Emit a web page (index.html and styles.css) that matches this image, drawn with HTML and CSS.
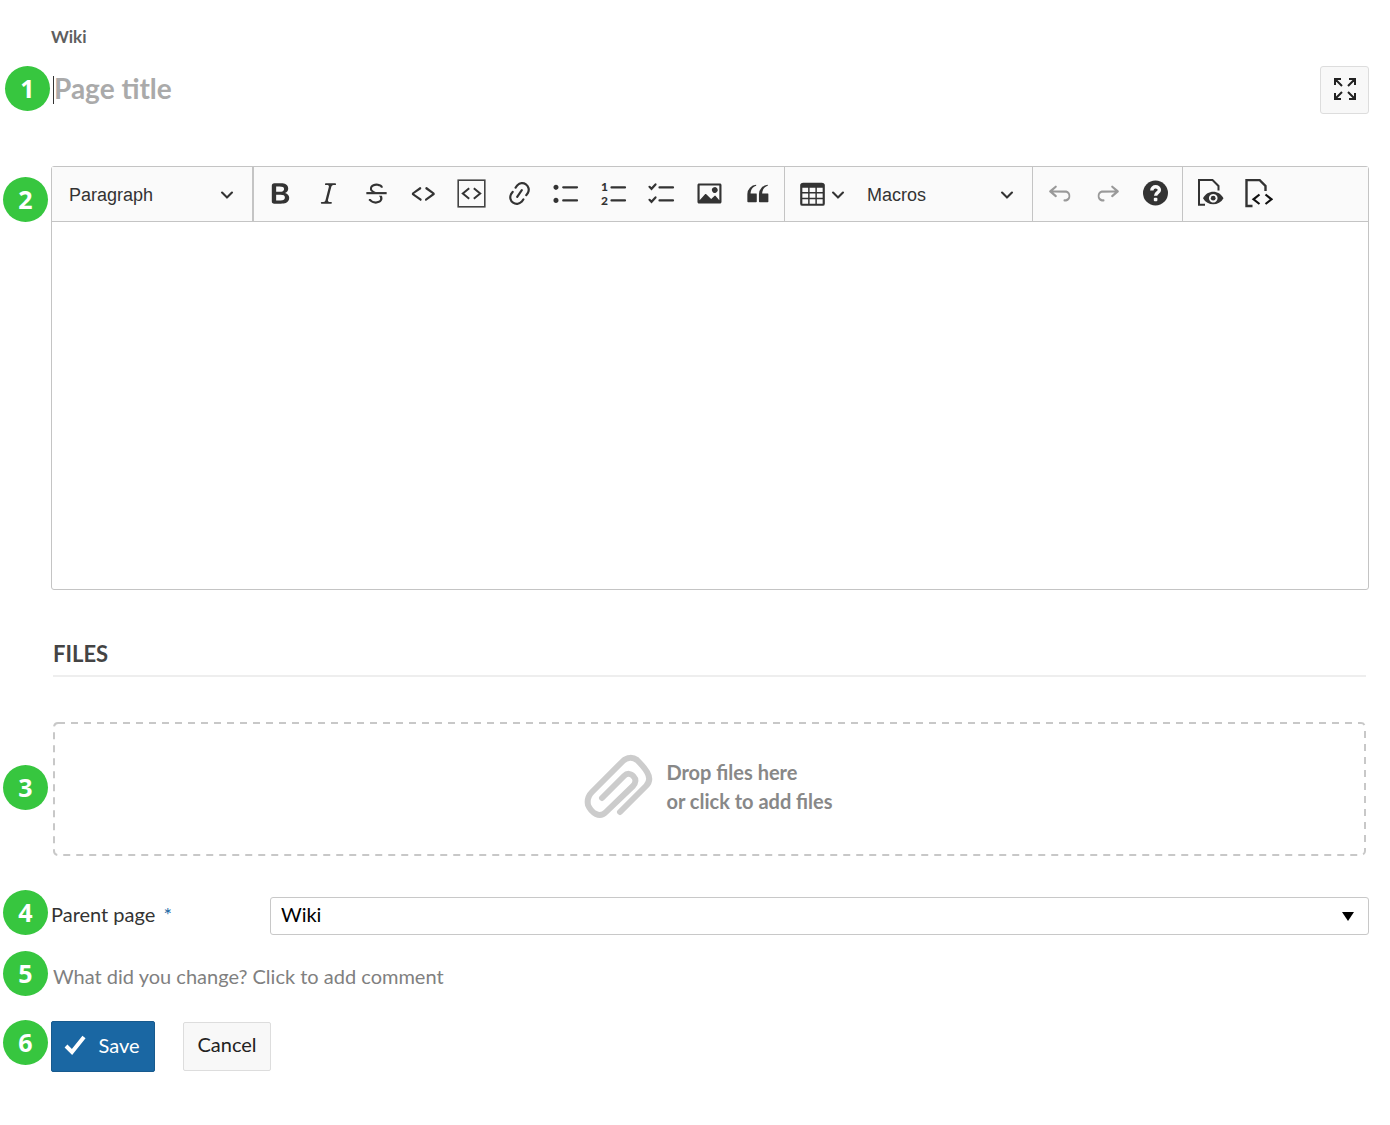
FILE: index.html
```html
<!DOCTYPE html>
<html lang="en">
<head>
<meta charset="utf-8">
<meta name="viewport" content="width=device-width, initial-scale=1">
<title>New wiki page</title>
<link rel="stylesheet" href="styles.css">
</head>
<body>
<form class="page">
  <nav class="breadcrumb"><a href="#">Wiki</a></nav>

  <div class="title-row">
    <span class="badge badge-title">1</span>
    <span class="caret"></span>
    <input class="title-input" type="text" placeholder="Page title" aria-label="Page title">
    <button class="zen" type="button" aria-label="Toggle full screen">
      <svg width="22" height="22" viewBox="0 0 22 22" fill="none" stroke="#222" stroke-width="2"><path d="M1 7V1H7M1 1L8 8M15 1H21V7M21 1L14 8M1 15V21H7M1 21L8 14M21 15V21H15M21 21L14 14"/></svg>
    </button>
  </div>

  <section class="editor">
    <span class="badge badge-editor">2</span>
    <div class="toolbar" role="toolbar" aria-label="Editor toolbar">
      <div class="group group-style">
        <div class="picker">
          <select aria-label="Heading"><option>Paragraph</option></select>
          <svg class="chevron" viewBox="0 0 10 10"><path d="M.941 4.523a.75.75 0 1 1 1.060-1.060l3.006 3.005 3.005-3.005a.75.75 0 1 1 1.060 1.060l-3.549 3.550a.75.75 0 0 1-1.168-.136L.941 4.523z"/></svg>
        </div>
      </div>
      <div class="group group-format">
        <button class="tool" type="button" aria-label="Bold"><svg viewBox="0 0 20 20"><path d="M10.187 17H5.773c-.637 0-1.092-.138-1.364-.415-.273-.277-.409-.718-.409-1.323V4.738c0-.617.14-1.062.419-1.332.279-.27.73-.406 1.354-.406h4.680c.69 0 1.288.041 1.793.124.506.083.96.242 1.360.478.341.197.644.447.906.75a3.262 3.262 0 0 1 .808 2.162c0 1.401-.722 2.426-2.167 3.075C15.050 10.175 16 11.315 16 13.010a3.756 3.756 0 0 1-2.296 3.504 6.100 6.100 0 0 1-1.517.377c-.571.073-1.238.11-2 .11zm-.217-6.217H7v4.087h3.069c1.977 0 2.965-.69 2.965-2.072 0-.707-.256-1.220-.768-1.537-.512-.319-1.277-.478-2.296-.478zM7 5.130v3.619h2.606c.729 0 1.292-.067 1.690-.2a1.600 1.600 0 0 0 .91-.765c.165-.267.247-.566.247-.897 0-.707-.26-1.176-.778-1.409-.519-.232-1.310-.348-2.375-.348H7z"/></svg></button>
        <button class="tool" type="button" aria-label="Italic"><svg viewBox="0 0 20 20"><path d="m9.586 14.633.021.004c-.036.335.095.655.393.962.082.083.173.15.274.201h1.474a.6.6 0 1 1 0 1.200H5.304a.6.6 0 0 1 0-1.200h1.150c.474-.07.809-.182 1.005-.334.157-.122.291-.32.404-.597l2.416-9.550a1.053 1.053 0 0 0-.281-.823 1.120 1.120 0 0 0-.442-.296H8.150a.6.6 0 0 1 0-1.200h6.443a.6.6 0 1 1 0 1.200h-1.195c-.376.056-.65.155-.823.296-.215.175-.423.439-.623.79l-2.366 9.347z"/></svg></button>
        <button class="tool" type="button" aria-label="Strikethrough"><svg viewBox="0 0 20 20"><path d="M7 16.400c-.8-.4-1.500-.9-2.200-1.500a.6.6 0 0 1-.2-.5l.3-.6h1c1 1.200 2.100 1.700 3.700 1.700 1 0 1.800-.3 2.300-.6.6-.4.6-1.200.6-1.300.2-1.200-.9-2.100-.9-2.100h2.100c.3.7.4 1.200.4 1.700v.8l-.6 1.200c-.6.8-1.100 1-1.600 1.200a6 6 0 0 1-2.400.6c-1 0-1.800-.3-2.500-.6zM6.800 9L6 8.300c-.4-.5-.5-.8-.5-1.600 0-.7.1-1.300.5-1.800.4-.6 1-1 1.600-1.300a6.300 6.300 0 0 1 4.700 0 4 4 0 0 1 1.700 1l.3.7c0 .1.2.4-.2.7-.4.2-.9.1-1 0a3 3 0 0 0-1.200-1c-.4-.2-1-.3-2-.4-.7 0-1.400.2-2 .6-.8.6-1 .8-1 1.500 0 .8.5 1 1.200 1.500.6.4 1.100.7 1.900 1H6.800z"/><path d="M3 10.500V9h14v1.500z"/></svg></button>
        <button class="tool" type="button" aria-label="Code"><svg viewBox="0 0 20 20"><path d="m12.500 5.700 5.200 3.900v1.300l-5.600 4c-.1.2-.3.2-.5.2-.3-.1-.6-.7-.6-1l.3-.4 4.700-3.500L11.500 7l-.2-.2c-.1-.3-.1-.6 0-.8.2-.2.5-.4.8-.4a.8.8 0 0 1 .4.1zm-5.200 0L2 9.600v1.300l5.600 4c.1.2.3.2.5.2.3-.1.7-.7.6-1 0-.1 0-.3-.2-.4l-5-3.500L8.200 7l.2-.2c.1-.3.1-.6 0-.8-.2-.2-.5-.4-.8-.4a.8.8 0 0 0-.3.1z"/></svg></button>
        <button class="tool" type="button" aria-label="Insert code snippet"><svg viewBox="0 0 29 29" fill="none"><rect x="1.200" y="1.200" width="26.600" height="26.600" fill="none" stroke="#444" stroke-width="1.600"/><path d="M12.200 9.200L5.800 14.500L12.200 19.800M16.800 9.200L23.200 14.500L16.800 19.800" fill="none" stroke="#333" stroke-width="2"/></svg></button>
        <button class="tool" type="button" aria-label="Link"><svg viewBox="0 0 20 20"><path d="m11.077 15 .991-1.416a.75.75 0 1 1 1.229.86l-1.148 1.640a.748.748 0 0 1-.217.206 5.251 5.251 0 0 1-8.503-5.955.741.741 0 0 1 .12-.274l1.147-1.639a.75.75 0 1 1 1.228.86L4.933 10.700l.006.003a3.750 3.750 0 0 0 6.132 4.294l.006.004zm5.494-5.335a.748.748 0 0 1-.12.274l-1.147 1.639a.75.75 0 1 1-1.228-.86l.86-1.230a3.750 3.750 0 0 0-6.144-4.301l-.86 1.229a.75.75 0 0 1-1.229-.86l1.148-1.640a.748.748 0 0 1 .217-.206 5.251 5.251 0 0 1 8.503 5.955zm-4.563-2.532a.75.75 0 0 1 .184 1.045l-3.155 4.505a.75.75 0 1 1-1.229-.86l3.155-4.506a.75.75 0 0 1 1.045-.184z"/></svg></button>
        <button class="tool" type="button" aria-label="Bulleted list"><svg viewBox="0 0 20 20"><path d="M7 5.750c0 .414.336.75.75.75h9.500a.75.75 0 1 0 0-1.500h-9.500a.75.75 0 0 0-.75.75zm-6 0C1 4.784 1.777 4 2.750 4c.966 0 1.750.777 1.750 1.750 0 .966-.777 1.750-1.750 1.750C1.784 7.500 1 6.723 1 5.750zm6 9c0 .414.336.75.75.75h9.500a.75.75 0 1 0 0-1.500h-9.500a.75.75 0 0 0-.75.75zm-6 0c0-.966.777-1.750 1.750-1.750.966 0 1.750.777 1.750 1.750 0 .966-.777 1.750-1.750 1.750-.966 0-1.750-.777-1.750-1.750z"/></svg></button>
        <button class="tool" type="button" aria-label="Numbered list"><svg viewBox="0 0 29 29"><path d="M11.500 8.400h13.500M11.500 21.400h13.500" fill="none" stroke="#333" stroke-width="2.200" stroke-linecap="round"/><text class="list-digit" x="1" y="12">1</text><text class="list-digit" x="1" y="26">2</text></svg></button>
        <button class="tool" type="button" aria-label="To-do list"><svg viewBox="0 0 29 29"><path d="M12.500 8.400h13.500M12.500 21.400h13.500M2.500 7.800l2 2 4-4.400M2.500 20.800l2 2 4-4.400" fill="none" stroke="#333" stroke-width="2.200" stroke-linecap="round"/></svg></button>
        <button class="tool" type="button" aria-label="Insert image"><svg viewBox="0 0 20 20"><path d="M6.910 10.540c.26-.23.64-.21.88.03l3.360 3.140 2.230-2.060a.64.64 0 0 1 .87 0l2.520 2.970V4.500H3.200v10.120l3.710-4.080zm10.270-7.510c.6 0 1.090.47 1.090 1.050v11.840c0 .59-.49 1.060-1.090 1.060H2.790c-.6 0-1.090-.47-1.090-1.060V4.080c0-.58.49-1.050 1.100-1.050h14.380zm-5.220 5.560a1.960 1.960 0 1 1 3.400-1.960 1.960 1.960 0 0 1-3.400 1.960z"/></svg></button>
        <button class="tool" type="button" aria-label="Block quote"><svg viewBox="0 0 20 20"><path d="M3 10.423a6.500 6.500 0 0 1 6.056-6.408l.038.67C6.448 5.423 5.354 7.663 5.220 10H9c.552 0 .5.432.5.986v4.511c0 .554-.448.503-1 .503h-5c-.552 0-.5-.449-.5-1.003v-4.574zm8 0a6.500 6.500 0 0 1 6.056-6.408l.038.67c-2.646.739-3.740 2.979-3.873 5.315H17c.552 0 .5.432.5.986v4.511c0 .554-.448.503-1 .503h-5c-.552 0-.5-.449-.5-1.003v-4.574z"/></svg></button>
      </div>
      <div class="group group-insert">
        <button class="tool tool-table" type="button" aria-label="Insert table"><svg viewBox="0 0 20 20"><path d="M3 6v3h4V6H3zm0 4v3h4v-3H3zm0 4v3h4v-3H3zm5 3h4v-3H8v3zm5 0h4v-3h-4v3zm4-4v-3h-4v3h4zm0-4V6h-4v3h4zm1.500 8a1.500 1.500 0 0 1-1.500 1.500H3A1.500 1.500 0 0 1 1.500 17V4c.222-.863 1.068-1.500 2-1.500h13c.932 0 1.778.637 2 1.500v13zM12 13v-3H8v3h4zm0-4V6H8v3h4z"/></svg><svg class="chevron" viewBox="0 0 10 10"><path d="M.941 4.523a.75.75 0 1 1 1.060-1.060l3.006 3.005 3.005-3.005a.75.75 0 1 1 1.060 1.060l-3.549 3.550a.75.75 0 0 1-1.168-.136L.941 4.523z"/></svg></button>
        <div class="picker">
          <select aria-label="Macros"><option>Macros</option></select>
          <svg class="chevron" viewBox="0 0 10 10"><path d="M.941 4.523a.75.75 0 1 1 1.060-1.060l3.006 3.005 3.005-3.005a.75.75 0 1 1 1.060 1.060l-3.549 3.550a.75.75 0 0 1-1.168-.136L.941 4.523z"/></svg>
        </div>
      </div>
      <div class="group group-history">
        <button class="tool tool-off" type="button" aria-label="Undo"><svg viewBox="0 0 20 20"><path d="m5.042 9.367 2.189 1.837a.75.75 0 0 1-.965 1.149l-3.788-3.180a.747.747 0 0 1-.21-.284.75.75 0 0 1 .17-.945L6.230 4.762a.75.75 0 1 1 .964 1.150L4.863 7.866h8.917A.75.75 0 0 1 14 7.900a4 4 0 0 1 0 7.600h-1.200a.7.7 0 0 1 0-1.500h.9a2.400 2.400 0 0 0 .3-4.600z"/></svg></button>
        <button class="tool tool-off" type="button" aria-label="Redo"><svg viewBox="0 0 20 20"><g transform="matrix(-1 0 0 1 20 0)"><path d="m5.042 9.367 2.189 1.837a.75.75 0 0 1-.965 1.149l-3.788-3.180a.747.747 0 0 1-.21-.284.75.75 0 0 1 .17-.945L6.230 4.762a.75.75 0 1 1 .964 1.150L4.863 7.866h8.917A.75.75 0 0 1 14 7.900a4 4 0 0 1 0 7.600h-1.200a.7.7 0 0 1 0-1.500h.9a2.400 2.400 0 0 0 .3-4.600z"/></g></svg></button>
        <button class="tool" type="button" aria-label="Help"><svg viewBox="0 0 29 29"><circle cx="14.500" cy="14" r="12.500"/><path d="M10.800 11.500C10.800 6.500 18.400 6.800 18.400 11C18.400 13.800 14.600 13.600 14.600 16.800" fill="none" stroke="#fafafa" stroke-width="3.400"/><rect x="12.800" y="18.700" width="3.600" height="3.600" rx="1" fill="#fafafa"/></svg></button>
      </div>
      <div class="group group-view">
        <button class="tool" type="button" aria-label="Preview"><svg viewBox="0 0 29 29"><path d="M9 25.800H3V1H16.500L22.500 7V11.500" fill="none" stroke="#333" stroke-width="2"/><path fill-rule="evenodd" d="M7 19.300C11.500 10.700 23 10.700 27.500 19.300C23 27.300 11.500 27.300 7 19.300zM17.200 14.900a4.300 4.300 0 1 0 .1 0z"/><circle cx="17.200" cy="19.200" r="2.400"/></svg></button>
        <button class="tool" type="button" aria-label="Source"><svg viewBox="0 0 29 29"><path d="M8.500 27H2.500V1H15.500L21.500 7V12" fill="none" stroke="#333" stroke-width="2.400"/><path d="M15.500 15.500L9.500 20.300L15.500 25M21.500 15.500L27.500 20.300L21.500 25" fill="none" stroke="#111" stroke-width="2.200"/></svg></button>
      </div>
    </div>
    <div class="content" contenteditable="true" role="textbox" aria-label="Page content"></div>
  </section>

  <section class="files">
    <h2>Files</h2>
    <div class="drop-wrap">
      <span class="badge badge-drop">3</span>
      <label class="dropzone">
        <input class="file-input" type="file" multiple>
        <svg class="dashes"><rect x="1" y="1" width="100%" height="100%" rx="4"/></svg>
        <svg class="clip" width="70" height="66" viewBox="0 0 70 66"><path d="M36 58L62 32C66 28 66 23 63 18C60 13 57 10 53 6C49 3 43 3 39 7L8 38C4 42 3 46 4 51C6 56 8 58 12 60C16 62 19 61 22 58L49 32C52 29 52 25 50 23C47 19 43 19 40 22L18 44" fill="none" stroke="#ccc" stroke-width="6" stroke-linecap="round" stroke-linejoin="round"/></svg>
        <span class="drop-text">Drop files here<br>or click to add files</span>
      </label>
    </div>
  </section>

  <div class="field">
    <span class="badge badge-row">4</span>
    <label class="field-label" for="parent">Parent page <span class="required">*</span></label>
    <div class="picker parent">
      <select id="parent"><option>Wiki</option></select>
      <svg class="arrow" width="12" height="9" viewBox="0 0 12 9"><path d="M0 0H12L6 9z"/></svg>
    </div>
  </div>

  <div class="comment">
    <span class="badge badge-row">5</span>
    <input class="comment-input" type="text" placeholder="What did you change? Click to add comment" aria-label="Comment">
  </div>

  <div class="actions">
    <span class="badge badge-row">6</span>
    <button class="save" type="submit"><svg width="22" height="20" viewBox="0 0 22 20"><path d="M2 11L8 17L20 2" fill="none" stroke="#fff" stroke-width="4"/></svg>Save</button>
    <button class="cancel" type="button">Cancel</button>
  </div>
</form>
</body>
</html>
```
FILE: styles.css
```css
* {
  box-sizing: border-box;
}

body {
  margin: 0;
  background: #fff;
  color: #333;
  font-family: Lato, "Liberation Sans", sans-serif;
  font-size: 20px;
  line-height: 30px;
}

button,
input,
select {
  margin: 0;
  font: inherit;
  color: inherit;
}

button {
  padding: 0;
  cursor: pointer;
}

.page {
  padding: 24px 21px 48px 51px;
}

.breadcrumb {
  font-size: 17px;
  line-height: 26px;
  font-weight: 700;
}

.breadcrumb a {
  color: #5f5f5f;
  text-decoration: none;
}

/* Numbered callouts in the left margin */
.badge {
  position: absolute;
  left: -48px;
  width: 45px;
  height: 45px;
  border-radius: 50%;
  background: #37c63f;
  color: #fff;
  font-family: "Open Sans", "Noto Sans", sans-serif;
  font-size: 25px;
  line-height: 45px;
  font-weight: 700;
  text-align: center;
}

.badge-title {
  left: -46px;
  top: 0;
}

.badge-editor {
  left: -49px;
  top: 10px;
}

.badge-drop {
  left: -50px;
  top: 43px;
}

.badge-row {
  top: -1px;
}

/* Title */
.title-row {
  position: relative;
  display: flex;
  align-items: center;
  margin-top: 16px;
}

.caret {
  width: 1px;
  height: 28px;
  margin-left: 2px;
  background: #333;
}

.title-input {
  flex: 1;
  min-width: 0;
  height: 44px;
  padding: 0 0 4px;
  border: 0;
  outline: 0;
  background: none;
  font-size: 28px;
  font-weight: 700;
}

.title-input::placeholder {
  color: #aaa;
}

.zen {
  display: grid;
  place-items: center;
  width: 49px;
  height: 48px;
  padding-bottom: 2px;
  border: 1px solid #ddd;
  border-radius: 3px;
  background: #f8f8f8;
}

/* Editor */
.editor {
  position: relative;
  margin-top: 52px;
  border: 1px solid #c4c4c4;
  border-radius: 3px;
}

.toolbar {
  display: flex;
  min-height: 55px;
  border-bottom: 1px solid #c4c4c4;
  background: #fafafa;
}

.group {
  display: flex;
  border-right: 1px solid #c4c4c4;
}

.group-style {
  width: 202px;
  border-right-width: 2px;
}

.group-format {
  width: 531px;
  padding: 0 3px;
}

.group-insert {
  width: 248px;
}

.group-history {
  width: 150px;
  padding: 0 3px 0 4px;
}

.group-view {
  width: 102px;
  padding: 0 3px;
  border-right: 0;
}

.tool {
  display: flex;
  flex: 1;
  align-items: center;
  justify-content: center;
  padding-bottom: 1px;
  border: 0;
  background: none;
}

.tool svg {
  width: 29px;
  height: 29px;
  fill: #333;
}

.tool-off svg {
  fill: #999;
}

.tool .chevron,
.chevron {
  width: 14px;
  height: 14px;
  fill: #333;
}

.tool-table {
  flex: none;
  gap: 4px;
  width: 72px;
}

.list-digit {
  font-family: Lato, sans-serif;
  font-size: 12px;
  font-weight: 900;
}

.picker {
  display: grid;
  flex: 1;
  align-items: center;
}

.picker select,
.picker svg {
  grid-area: 1 / 1;
}

.picker select {
  width: 100%;
  height: 100%;
  border: 0;
  background: none;
  appearance: none;
}

.picker svg {
  justify-self: end;
  margin-right: 18px;
  pointer-events: none;
}

.toolbar select {
  padding: 2px 17px 0;
  font-family: "Liberation Sans", Arial, sans-serif;
  font-size: 18px;
}

.group-insert select {
  padding: 2px 10px 0;
}

.content {
  min-height: 367px;
  outline: 0;
}

/* Files */
.files {
  margin: 48px 3px 0 2px;
}

.files h2 {
  margin: 0;
  padding-bottom: 5px;
  border-bottom: 2px solid #eee;
  color: #444;
  font-size: 22px;
  line-height: 32px;
  font-weight: 700;
  text-transform: uppercase;
}

.drop-wrap {
  position: relative;
  margin-top: 45px;
}

.dropzone {
  position: relative;
  display: flex;
  align-items: center;
  justify-content: center;
  gap: 12px;
  min-height: 134px;
  padding: 0 2px 4px 0;
  cursor: pointer;
}

.file-input {
  position: absolute;
  width: 1px;
  height: 1px;
  opacity: 0;
}

.dashes {
  position: absolute;
  inset: 0 2px 2px 0;
  width: calc(100% - 2px);
  height: calc(100% - 2px);
  overflow: visible;
}

.dashes rect {
  fill: none;
  stroke: #c8c8c8;
  stroke-width: 2px;
  stroke-dasharray: 7 6;
}

.drop-text {
  color: #888;
  font-weight: 700;
  line-height: 29px;
}

/* Form rows */
.field {
  position: relative;
  display: flex;
  margin-top: 41px;
}

.field .badge-row {
  top: -7px;
}

.field-label {
  width: 219px;
  line-height: 34px;
}

.required {
  margin-left: 3px;
  color: #1a67a3;
}

.parent {
  height: 38px;
  border: 1px solid #c8c8c8;
  border-radius: 3px;
  color: #000;
}

.parent select {
  padding: 0 10px 4px;
}

.parent .arrow {
  margin-right: 14px;
}

.comment {
  position: relative;
  margin-top: 27px;
}

.comment .badge-row {
  top: -11px;
}

.comment-input {
  display: block;
  width: 100%;
  height: 30px;
  padding: 0 2px 2px;
  border: 0;
  outline: 0;
  background: none;
}

.comment-input::placeholder {
  color: #808080;
}

.actions {
  position: relative;
  display: flex;
  align-items: center;
  gap: 28px;
  margin-top: 29px;
}

.save {
  display: flex;
  align-items: center;
  justify-content: center;
  gap: 12px;
  width: 104px;
  height: 51px;
  padding: 0 2px 4px 0;
  border: 1px solid #175a8e;
  border-radius: 2px;
  background: #1a67a3;
  color: #fff;
}

.cancel {
  width: 88px;
  height: 49px;
  padding-bottom: 5px;
  border: 1px solid #ddd;
  border-radius: 2px;
  background: #f8f8f8;
  color: #222;
}
```
